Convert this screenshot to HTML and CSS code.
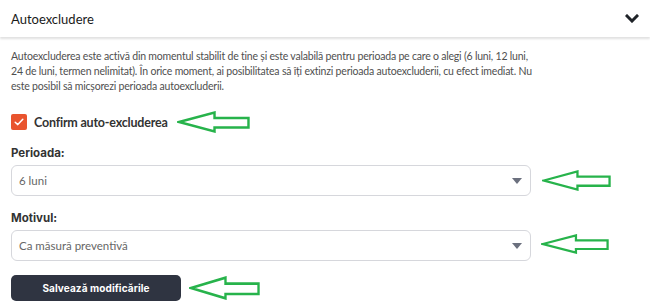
FILE: index.html
```html
<!DOCTYPE html>
<html lang="ro">
<head>
<meta charset="utf-8">
<title>Autoexcludere</title>
<link rel="stylesheet" href="styles.css">
</head>
<body>
<header class="panel-head">
  <span class="panel-title">Autoexcludere</span>
  <svg class="chevron" width="14" height="9" viewBox="0 0 14 9"><polyline points="2,2 7,7 12,2" fill="none" stroke="#1f2328" stroke-width="3" stroke-linecap="square"/></svg>
</header>
<main class="panel-body">
  <p class="desc">Autoexcluderea este activă din momentul stabilit de tine și este valabilă pentru perioada pe care o alegi (6 luni, 12 luni, 24 de luni, termen nelimitat). În orice moment, ai posibilitatea să îți extinzi perioada autoexcluderii, cu efect imediat. Nu este posibil să micșorezi perioada autoexcluderii.</p>

  <div class="row check-row">
    <label class="check">
      <span class="box"><svg width="10" height="8" viewBox="0 0 10 8"><polyline points="1.2,4.2 3.8,6.6 8.8,1.2" fill="none" stroke="#fff" stroke-width="1.5" stroke-linecap="round" stroke-linejoin="round"/></svg></span>
      <span class="check-text">Confirm auto-excluderea</span>
    </label>
    <svg class="arrow a1" viewBox="0 0 72 22" preserveAspectRatio="none"><polygon points="2,11 37,1.5 37,7 70.5,7 70.5,16.5 37,16.5 37,20.5" fill="none" stroke="#27b34b" stroke-width="2.4" stroke-linejoin="miter"/></svg>
  </div>

  <div class="field">
    <div class="label">Perioada:</div>
    <div class="row">
      <div class="select"><span>6 luni</span><span class="caret"></span></div>
      <svg class="arrow a2" viewBox="0 0 72 22" preserveAspectRatio="none"><polygon points="2,11 37,1.5 37,7 70.5,7 70.5,16.5 37,16.5 37,20.5" fill="none" stroke="#27b34b" stroke-width="2.4"/></svg>
    </div>
  </div>

  <div class="field">
    <div class="label">Motivul:</div>
    <div class="row">
      <div class="select"><span>Ca măsură preventivă</span><span class="caret"></span></div>
      <svg class="arrow a3" viewBox="0 0 72 22" preserveAspectRatio="none"><polygon points="2,11 37,1.5 37,7 70.5,7 70.5,16.5 37,16.5 37,20.5" fill="none" stroke="#27b34b" stroke-width="2.4"/></svg>
    </div>
  </div>

  <div class="row btn-row">
    <button class="btn" type="button">Salvează modificările</button>
    <svg class="arrow a4" viewBox="0 0 72 22" preserveAspectRatio="none"><polygon points="2,11 37,1.5 37,7 70.5,7 70.5,16.5 37,16.5 37,20.5" fill="none" stroke="#27b34b" stroke-width="2.4"/></svg>
  </div>
</main>
</body>
</html>
```
FILE: styles.css
```css
* { box-sizing: border-box; }
html, body { margin: 0; padding: 0; background: #fff; }
body { font-family: Lato, "Open Sans", sans-serif; color: #333; width: 650px; height: 308px; overflow: hidden; }

.panel-head {
  height: 37px;
  padding: 0 11px;
  display: flex;
  align-items: center;
  justify-content: space-between;
  background: #fff;
  box-shadow: 0 2px 2px rgba(0,0,0,0.12);
  position: relative;
}
.panel-title { font-size: 13px; font-weight: 400; color: #1a1a1a; }

.panel-body { padding: 12px 11px 0; }
.desc {
  margin: 0;
  width: 522px;
  font-size: 10.5px;
  letter-spacing: -0.2px;
  line-height: 15px;
  color: #4f4f4f;
}

.row { display: flex; align-items: center; }
.check-row { margin-top: 20px; height: 16px; }
.check { display: flex; align-items: center; gap: 7px; }
.box {
  width: 16px; height: 16px;
  background: #e9542e;
  border-radius: 2px;
  display: flex; align-items: center; justify-content: center;
}
.check-text { font-size: 12.5px; letter-spacing: -0.2px; font-weight: 700; color: #333; }

.field { margin-top: 15px; }
.field + .field { margin-top: 14px; }
.label {
  font-family: Inter, "Noto Sans", sans-serif;
  font-size: 11.5px; font-weight: 700; line-height: 16px; color: #333;
  margin-bottom: 4px;
}
.select {
  width: 520px; height: 31px;
  border: 1px solid #d6d7dc;
  border-radius: 6px;
  padding: 0 8px 0 7px;
  display: flex; align-items: center; justify-content: space-between;
  font-size: 11.5px; color: #666;
}
.caret {
  width: 0; height: 0;
  border-left: 5px solid transparent;
  border-right: 5px solid transparent;
  border-top: 6px solid #6b707e;
}

.arrow { display: block; flex: none; }
.a1 { width: 73px; height: 22px; margin-left: 9px; }
.a2 { width: 69px; height: 21px; margin-left: 11px; }
.a3 { width: 68px; height: 20px; margin-left: 10px; margin-top: -4px; }
.a4 { width: 71px; height: 24px; margin-left: 8px; }

.btn-row { margin-top: 14px; }
.btn {
  width: 170px; height: 26px;
  border: 0; border-radius: 5px;
  background: #2f3441;
  color: #fff;
  font-family: Inter, "Noto Sans", sans-serif;
  font-size: 10px; font-weight: 700; letter-spacing: 0.1px;
  padding: 0;
}
```
